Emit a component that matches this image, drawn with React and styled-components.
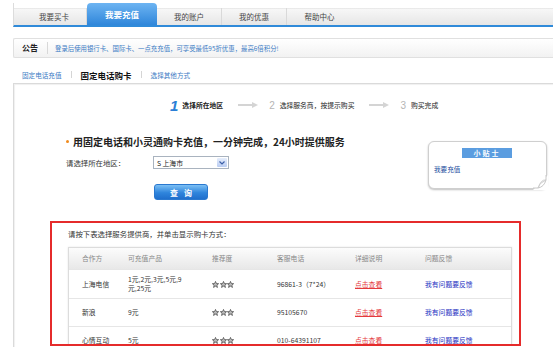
import React from "react";
import styled, { createGlobalStyle } from "styled-components";

const GlobalStyle = createGlobalStyle`
  body {
    margin: 0;
    background: #fff;
    font-family: "Noto Sans CJK SC", "Liberation Sans", sans-serif;
    color: #333;
    overflow: hidden;
  }
`;

const Page = styled.div`
  width: 553px;
  height: 347px;
  overflow: hidden;
`;

const Nav = styled.div`
  display: flex;
  align-items: flex-end;
  margin: 3px 0 0 13px;
  height: 22px;
  padding-left: 8px;
  border-bottom: 2px solid #2f8ad9;
  background: linear-gradient(
    to bottom,
    #fff 0,
    #fff 5px,
    #dcdcdc 5px,
    #f7f7f7 6px,
    #e6e6e6 100%
  );
  border-left: 1px solid #dcdcdc;
`;

const Tab = styled.div`
  width: ${(p) => (p.$active ? "70px" : "65px")};
  height: ${(p) => (p.$active ? "22px" : "17px")};
  display: flex;
  align-items: center;
  justify-content: center;
  font-size: ${(p) => (p.$active ? "8.5px" : "7.5px")};
  font-weight: ${(p) => (p.$active ? 700 : 400)};
  color: ${(p) => (p.$active ? "#fff" : "#444")};
  border-radius: ${(p) => (p.$active ? "4px 4px 0 0" : "0")};
  background: ${(p) =>
    p.$active ? "linear-gradient(to bottom, #6db4f2, #2f86da)" : "none"};
  border-right: ${(p) =>
    p.$active || p.$last ? "none" : "1px solid #d9d9d9"};
  box-sizing: border-box;
`;

const Notice = styled.div`
  display: flex;
  align-items: center;
  margin: 11px 0 0 13px;
  height: 20px;
  border: 1px solid #e0e0e0;
  border-right: none;
  border-radius: 2px 0 0 2px;
  background: linear-gradient(to bottom, #fff, #f2f2f2);
  box-sizing: border-box;
`;

const NoticeTitle = styled.span`
  font-size: 8px;
  font-weight: 700;
  color: #222;
  padding: 0 9px 0 8px;
  border-right: 1px solid #d8d8d8;
  line-height: 12px;
`;

const NoticeText = styled.span`
  font-size: 6.4px;
  color: #3b7bc4;
  padding-left: 7px;
`;

const SubTabs = styled.div`
  display: flex;
  align-items: center;
  height: 17px;
  margin: 8px 0 0 22px;
`;

const SubTab = styled.span`
  font-size: ${(p) => (p.$active ? "8.5px" : "6.6px")};
  font-weight: ${(p) => (p.$active ? 700 : 400)};
  color: ${(p) => (p.$active ? "#111" : "#3b7bc4")};
`;

const SubSep = styled.span`
  width: 1px;
  height: 7px;
  background: #d5d5d5;
  margin: 0 9px;
`;

const Panel = styled.div`
  margin-left: 13px;
  border-top: 1px solid #dadada;
  border-left: 1px solid #dadada;
  box-shadow: inset 1px 1px 1px #f0f0f0;
  height: 270px;
`;

const Steps = styled.div`
  display: flex;
  align-items: center;
  padding: 14px 0 0 156px;
  height: 14px;
`;

const StepNum = styled.span`
  font-size: ${(p) => (p.$current ? "15px" : "10px")};
  font-style: ${(p) => (p.$current ? "italic" : "normal")};
  font-weight: ${(p) => (p.$current ? 700 : 400)};
  color: ${(p) => (p.$current ? "#2b7fd6" : "#b5b5b5")};
  margin-right: ${(p) => (p.$current ? "4px" : "5px")};
  font-family: "Liberation Sans", sans-serif;
`;

const StepText = styled.span`
  font-size: 6.8px;
  font-weight: ${(p) => (p.$current ? 700 : 400)};
  color: #222;
`;

const ArrowWrap = styled.span`
  display: flex;
  margin: 0 11px 0 15px;
`;

const Arrow = () => (
  <ArrowWrap>
    <svg width="20" height="6" viewBox="0 0 20 6">
      <rect x="0" y="2" width="15" height="2" fill="#d4d4d4" />
      <polygon points="14,0 20,3 14,6" fill="#d4d4d4" />
    </svg>
  </ArrowWrap>
);

const Main = styled.div`
  display: flex;
  align-items: flex-start;
  margin-top: 22px;
`;

const Form = styled.div`
  width: 362px;
  padding-left: 52px;
`;

const Headline = styled.div`
  display: flex;
  align-items: center;
  height: 14px;
  font-size: 10px;
  font-weight: 700;
  color: #222;
  white-space: nowrap;
`;

const Dot = styled.span`
  width: 3px;
  height: 3px;
  border-radius: 50%;
  background: #f08a1c;
  margin-right: 4px;
`;

const FieldRow = styled.div`
  display: flex;
  align-items: center;
  margin-top: 8px;
`;

const Label = styled.span`
  width: 87px;
  font-size: 7.4px;
  color: #333;
`;

const Select = styled.div`
  width: 76px;
  height: 13px;
  border: 1px solid #a9b3bf;
  box-sizing: border-box;
  display: flex;
  align-items: center;
  justify-content: space-between;
  padding: 0 1px 0 3px;
  font-size: 6.8px;
  color: #222;
  background: #fff;
`;

const SelectBtn = styled.span`
  width: 10px;
  height: 9px;
  border-radius: 1px;
  background: linear-gradient(to bottom, #e6eefc, #b9ccf2);
  display: flex;
  align-items: center;
  justify-content: center;
`;

const QueryButton = styled.button`
  margin: 15px 0 0 88px;
  width: 54px;
  height: 16px;
  border: 1px solid #2a78cf;
  border-radius: 3px;
  background: linear-gradient(to bottom, #7cc0f5, #2f85dc 55%, #1f6fcc);
  color: #fff;
  font-size: 8px;
  font-weight: 700;
  letter-spacing: 6px;
  padding: 0 0 0 6px;
  font-family: inherit;
  display: block;
`;

const Tip = styled.div`
  position: relative;
  width: 119px;
  height: 48px;
  margin-top: 7px;
  border: 1px solid #cfcfcf;
  border-radius: 6px;
  box-shadow: 0 1px 2px rgba(0, 0, 0, 0.25);
  box-sizing: border-box;
  background: #fff;
  padding: 6px 0 0 5px;
`;

const TipLabel = styled.div`
  width: 50px;
  height: 10px;
  margin-left: 28px;
  background: #5b9de0;
  color: #fff;
  font-size: 7px;
  font-weight: 700;
  letter-spacing: 2px;
  display: flex;
  align-items: center;
  justify-content: center;
`;

const TipLink = styled.div`
  margin-top: 6px;
  font-size: 6.6px;
  color: #1e4fa0;
`;

const Curl = styled.svg`
  position: absolute;
  right: -2px;
  bottom: -2px;
`;

const Highlight = styled.div`
  margin: 21px 0 0 36px;
  width: 471px;
  height: 125px;
  border: 2px solid #e52b2b;
  box-sizing: border-box;
  overflow: hidden;
  padding: 5px 0 0 16px;
`;

const Hint = styled.div`
  font-size: 7.4px;
  color: #333;
  line-height: 12px;
`;

const Table = styled.div`
  margin-top: 7px;
  width: 444px;
  border: 1px solid #dcdcdc;
  box-shadow: 0 0 2px rgba(0, 0, 0, 0.1);
  box-sizing: border-box;
`;

const Row = styled.div`
  display: grid;
  grid-template-columns: 46px 84px 65px 78px 70px 99px;
  align-items: center;
  height: ${(p) => p.$h}px;
  border-bottom: 1px solid #e6e6e6;
  background: ${(p) =>
    p.$head ? "linear-gradient(to bottom, #fcfcfc, #e8e8e8)" : "#fff"};
  color: ${(p) => (p.$head ? "#888" : "#333")};
  box-sizing: border-box;
`;

const Cell = styled.div`
  padding-left: 13px;
  font-size: 6.8px;
  line-height: 9px;
`;

const Product = styled.span`
  display: block;
  width: 66px;
`;

const Stars = styled.span`
  display: flex;
  gap: 0.5px;
`;

const Star = () => (
  <svg width="7" height="7" viewBox="0 0 10 10">
    <polygon
      points="5,0.6 6.3,3.6 9.5,3.8 7,5.9 7.8,9.2 5,7.4 2.2,9.2 3,5.9 0.5,3.8 3.7,3.6"
      fill="#bbb"
      stroke="#444"
      strokeWidth="1"
      strokeLinejoin="round"
    />
  </svg>
);

const RedLink = styled.span`
  color: #e4393c;
  text-decoration: underline;
`;

const BlueLink = styled.span`
  color: #1d2fbf;
`;

const rows = [
  { name: "上海电信", product: "1元,2元,3元,5元,9元,25元", tel: "96861-3（7*24）", h: 29 },
  { name: "新浪", product: "9元", tel: "95105670", h: 28 },
  { name: "心情互动", product: "5元", tel: "010-64391107", h: 28 },
];

export default function App() {
  return (
    <Page>
      <GlobalStyle />
      <Nav>
        <Tab>我要买卡</Tab>
        <Tab $active>我要充值</Tab>
        <Tab>我的账户</Tab>
        <Tab>我的优惠</Tab>
        <Tab $last>帮助中心</Tab>
      </Nav>

      <Notice>
        <NoticeTitle>公告</NoticeTitle>
        <NoticeText>
          登录后使用银行卡、国际卡、一点充充值，可享受最低95折优惠，最高6倍积分!
        </NoticeText>
      </Notice>

      <SubTabs>
        <SubTab>固定电话充值</SubTab>
        <SubSep />
        <SubTab $active>固定电话购卡</SubTab>
        <SubSep />
        <SubTab>选择其他方式</SubTab>
      </SubTabs>

      <Panel>
        <Steps>
          <StepNum $current>1</StepNum>
          <StepText $current>选择所在地区</StepText>
          <Arrow />
          <StepNum>2</StepNum>
          <StepText>选择服务商，按提示购买</StepText>
          <Arrow />
          <StepNum>3</StepNum>
          <StepText>购买完成</StepText>
        </Steps>

        <Main>
          <Form>
            <Headline>
              <Dot />
              用固定电话和小灵通购卡充值，一分钟完成，24小时提供服务
            </Headline>
            <FieldRow>
              <Label>请选择所在地区：</Label>
              <Select>
                <span>S 上海市</span>
                <SelectBtn>
                  <svg width="6" height="4" viewBox="0 0 6 4">
                    <path d="M0.5 0.5 L3 3 L5.5 0.5" stroke="#3b5fa8" strokeWidth="1.2" fill="none" />
                  </svg>
                </SelectBtn>
              </Select>
            </FieldRow>
            <QueryButton>查询</QueryButton>
          </Form>

          <Tip>
            <TipLabel>小贴士</TipLabel>
            <TipLink>我要充值</TipLink>
            <Curl width="15" height="15" viewBox="0 0 15 15">
              <path d="M0 15 L15 15 L15 0 Z" fill="#fff" />
              <path d="M0 13 L5 13 Q11 12 13 5 L13 0" fill="none" stroke="#c8c8c8" />
              <path d="M5 13 Q6 8 13 5 Q8 4 5 13 Z" fill="#eee" stroke="#c8c8c8" strokeWidth="0.8" />
            </Curl>
          </Tip>
        </Main>

        <Highlight>
          <Hint>请按下表选择服务提供商，并单击显示购卡方式：</Hint>
          <Table>
            <Row $head $h={22}>
              <Cell>合作方</Cell>
              <Cell>可充值产品</Cell>
              <Cell>推荐度</Cell>
              <Cell>客服电话</Cell>
              <Cell>详细说明</Cell>
              <Cell>问题反馈</Cell>
            </Row>
            {rows.map((r) => (
              <Row key={r.name} $h={r.h}>
                <Cell>{r.name}</Cell>
                <Cell>
                  <Product>{r.product}</Product>
                </Cell>
                <Cell>
                  <Stars>
                    <Star />
                    <Star />
                    <Star />
                  </Stars>
                </Cell>
                <Cell>{r.tel}</Cell>
                <Cell>
                  <RedLink>点击查看</RedLink>
                </Cell>
                <Cell>
                  <BlueLink>我有问题要反馈</BlueLink>
                </Cell>
              </Row>
            ))}
          </Table>
        </Highlight>
      </Panel>
    </Page>
  );
}
